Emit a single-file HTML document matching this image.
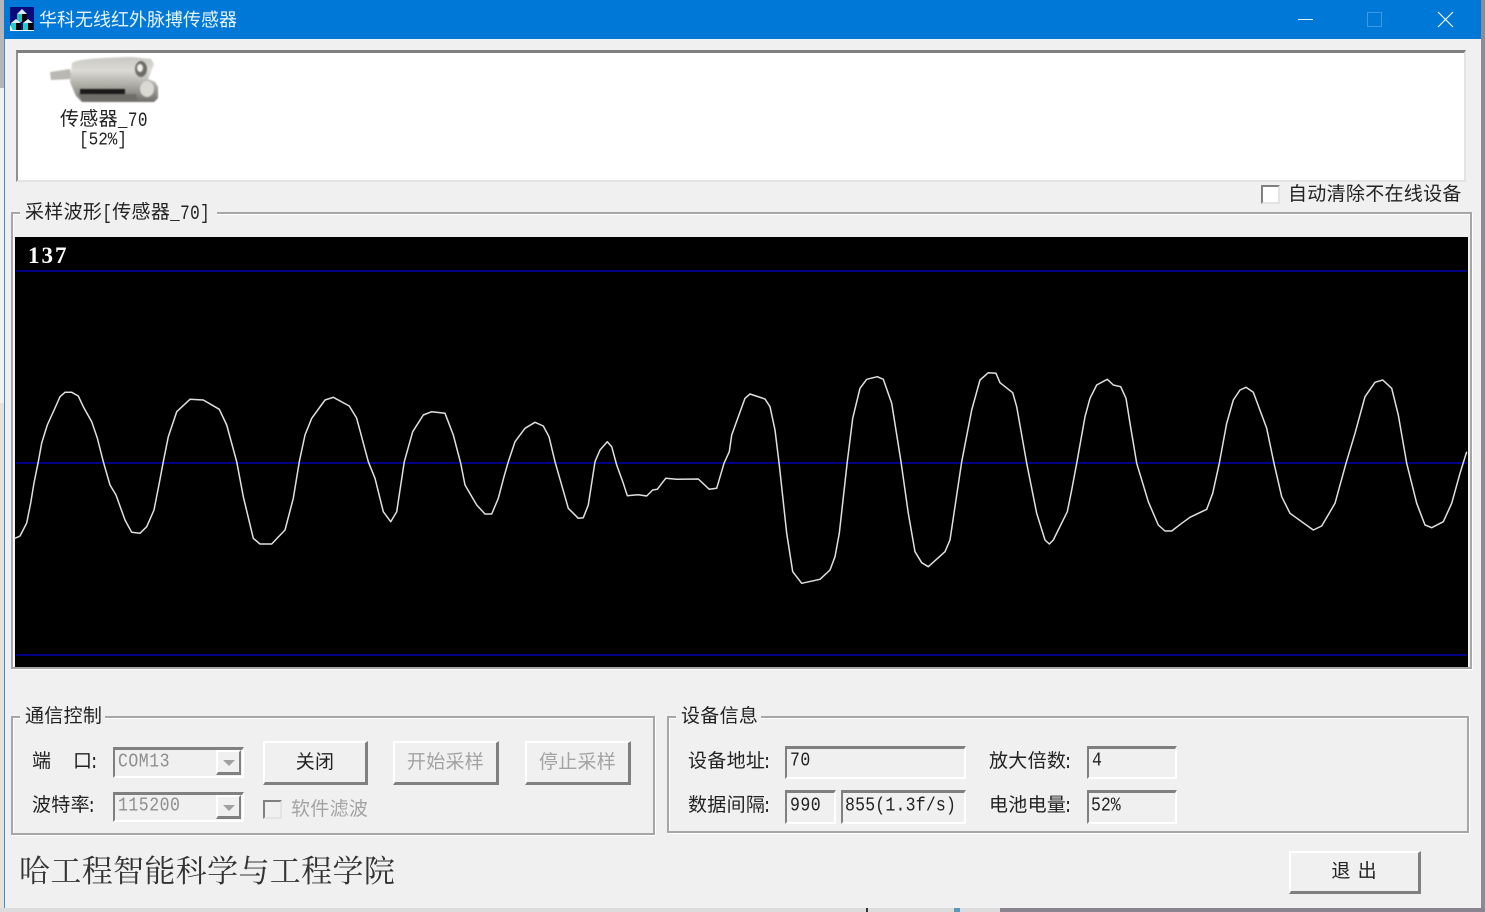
<!DOCTYPE html>
<html lang="zh-CN">
<head>
<meta charset="utf-8">
<title>华科无线红外脉搏传感器</title>
<style>
html,body{margin:0;padding:0;background:#8f8a92;}
body{width:1485px;height:912px;position:relative;overflow:hidden;font-family:"Liberation Mono","Noto Sans CJK SC",monospace;color:#222;}
.a{position:absolute;box-sizing:border-box;white-space:pre;}
.t{position:absolute;white-space:pre;font-size:19px;line-height:24px;color:#222;letter-spacing:.3px;font-family:"Liberation Mono","Noto Sans CJK SC",monospace;}
.t i{font-style:normal;font-size:16px;letter-spacing:.4px;display:inline-block;transform:scaleY(1.25);}
.t i.c{margin-left:-3px;}
.m{position:absolute;white-space:pre;font-size:16.5px;line-height:22px;color:#222;font-family:"Liberation Mono","Noto Serif CJK SC",monospace;letter-spacing:.5px;transform:scaleY(1.15);transform-origin:0 50%;}
.g{position:absolute;box-sizing:border-box;border:2px solid #a6a6a6;box-shadow:inset 1px 1px 0 #fff,1px 1px 0 #fff;}
.lg{position:absolute;background:#f0f0f0;height:24px;}
.in{position:absolute;box-sizing:border-box;border-top:3px solid #808080;border-left:2px solid #808080;border-right:2px solid #fff;border-bottom:2px solid #fff;background:#f0f0f0;}
.b{position:absolute;box-sizing:border-box;background:#f0f0f0;border-top:2px solid #fff;border-left:2px solid #fff;border-right:3px solid #808080;border-bottom:3px solid #808080;text-align:center;font-size:19px;letter-spacing:.3px;font-family:"Liberation Sans","Noto Sans CJK SC",sans-serif;color:#222;}
.cb{position:absolute;box-sizing:border-box;width:19px;height:19px;border-top:2px solid #808080;border-left:2px solid #808080;border-right:2px solid #e3e3e3;border-bottom:2px solid #e3e3e3;background:#fff;}
.ar{position:absolute;box-sizing:border-box;background:#f0f0f0;border-top:2px solid #fff;border-left:2px solid #fff;border-right:2px solid #808080;border-bottom:3px solid #808080;}
.ar:after{content:"";position:absolute;left:5px;top:8px;border-left:6px solid transparent;border-right:6px solid transparent;border-top:6px solid #a0a0a0;}
.d{color:#a3a3a3 !important;}
.m.d{color:#8f8f8f !important;}
</style>
</head>
<body>
<div class="a" style="left:0;top:0;width:4px;height:88px;background:#b5b5bb;"></div>
<div class="a" style="left:0;top:88px;width:4px;height:315px;background:#f1f1f1;"></div>
<div class="a" style="left:0;top:403px;width:4px;height:509px;background:#e6e3df;"></div>
<div class="a" style="left:1481px;top:0;width:4px;height:912px;background:#8f8a92;"></div>
<div class="a" style="left:0;top:908px;width:1000px;height:4px;background:#dcdcdc;"></div>
<div class="a" style="left:866px;top:908px;width:2px;height:4px;background:#333;"></div>
<div class="a" style="left:954px;top:908px;width:6px;height:4px;background:#5b9ab8;"></div>
<div class="a" style="left:1000px;top:908px;width:485px;height:4px;background:#8a8490;"></div>

<!-- window -->
<div class="a" style="left:4px;top:0;width:1477px;height:908px;background:#f0f0f0;border-left:1px solid #3d8fc9;"></div>
<div class="a" style="left:4px;top:0;width:1477px;height:39px;background:#0078d7;"></div>

<!-- app icon -->
<svg class="a" style="left:10px;top:7px" width="24" height="24" viewBox="0 0 24 24">
<rect width="24" height="24" fill="#0a0a7a"/>
<polygon points="7,7 12,2 17,7 12,11" fill="#d8e8f0"/>
<rect x="7" y="7" width="5" height="8" fill="#20c0c0"/><rect x="12" y="7" width="5" height="8" fill="#000"/>
<polygon points="1,16 6,12 11,16 6,19" fill="#e0f0f0"/>
<rect x="1" y="16" width="5" height="7" fill="#20d0d0"/><rect x="6" y="16" width="5" height="7" fill="#000"/>
<polygon points="13,16 18,12 23,16 18,19" fill="#e0f0f0"/>
<rect x="13" y="16" width="5" height="7" fill="#20d0d0"/><rect x="18" y="16" width="5" height="7" fill="#000"/>
<path d="M0 24V17L3 24Z" fill="#fff"/><rect x="0" y="23" width="24" height="1" fill="#fff"/>
</svg>
<div class="a" style="left:39px;top:8px;color:#e8f3fb;font:18px/24px 'Liberation Sans','Noto Sans CJK SC',sans-serif;">华科无线红外脉搏传感器</div>

<!-- window controls -->
<div class="a" style="left:1298px;top:19px;width:15px;height:1px;background:#e6f2fb;"></div>
<div class="a" style="left:1367px;top:12px;width:15px;height:15px;border:1px solid #3f9ae2;"></div>
<svg class="a" style="left:1437px;top:11px" width="17" height="17" viewBox="0 0 17 17"><path d="M1 1L16 16M16 1L1 16" stroke="#f2f8fd" stroke-width="1.2" fill="none"/></svg>

<!-- list box -->
<div class="a" style="left:16px;top:50px;width:1450px;height:132px;background:#fff;border-top:3px solid #808080;border-left:2px solid #909090;border-right:2px solid #e3e3e3;border-bottom:2px solid #e3e3e3;"></div>

<!-- sensor image -->
<svg class="a" style="left:48px;top:54px;filter:blur(.7px)" width="112" height="50" viewBox="0 0 112 50">
<defs>
<linearGradient id="s1" x1="0" y1="0" x2="0" y2="1"><stop offset="0" stop-color="#c9c8c2"/><stop offset=".3" stop-color="#dcdbd5"/><stop offset=".65" stop-color="#a9a8a1"/><stop offset="1" stop-color="#7d7c77"/></linearGradient>
<linearGradient id="s2" x1="0" y1="0" x2="0" y2="1"><stop offset="0" stop-color="#c2c1bb"/><stop offset="1" stop-color="#6f6e69"/></linearGradient>
</defs>
<path d="M2 18L22 15L24 25L3 26Z" fill="#b9b8b2"/>
<path d="M24 9C30 5 50 4 84 3L103 5L106 10L100 25L107 28L110 33L110 44L106 48L34 48L28 42L22 28Z" fill="url(#s1)"/>
<path d="M28 33L40 34L70 30L100 25L107 28L110 33L110 44L106 48L34 48Z" fill="url(#s2)"/>
<rect x="32" y="35" width="45" height="5" fill="#1a1a1a"/>
<path d="M30 40L88 40L90 48L36 48Z" fill="#6f6e68"/>
<ellipse cx="93" cy="15" rx="6" ry="8" fill="#6d6c68"/><ellipse cx="92" cy="14" rx="3" ry="4" fill="#f0efea"/>
<ellipse cx="99" cy="35" rx="7" ry="8" fill="#dad9d3"/>
</svg>
<div class="t" style="left:60px;top:108px;">传感器<i>_70</i></div>
<div class="m" style="left:79px;top:129px;font-size:16px;letter-spacing:0;">[52%]</div>

<!-- auto clear checkbox -->
<div class="cb" style="left:1261px;top:185px;"></div>
<div class="t" style="left:1288px;top:183px;">自动清除不在线设备</div>

<!-- wave group -->
<div class="g" style="left:11px;top:212px;width:1461px;height:457px;"></div>
<div class="lg" style="left:20px;top:200px;width:197px;"></div>
<div class="t" style="left:25px;top:201px;">采样波形<i>[</i>传感器<i>_70]</i></div>
<div class="a" style="left:15px;top:237px;width:1453px;height:430px;background:#000;"></div>
<svg class="a" style="left:0;top:0" width="1485" height="912" viewBox="0 0 1485 912">
<path d="M16 271H1467M16 463H1467M16 655H1467" stroke="#0000b0" stroke-width="1.6" fill="none"/>
<polyline fill="none" stroke="#e0e0e0" stroke-width="1.5" stroke-linejoin="round" points="15,538.3 20,536 26.7,523 30.7,503 34,483 38.3,461.7 41.7,443 47.3,425 55,408 60,396.7 65,392.3 71.7,392.3 78.3,396 83.3,406.7 91.7,421.7 97.3,438 103.3,461.7 110,485 116,495 125,520 131.7,532.3 140,533.3 146.7,526.7 154,510 159.3,483 163.3,461.7 168.3,436.7 176.7,411.7 190,399.3 203.3,400 219.3,409.3 226.7,425 236.7,461.7 243.3,496.7 253.3,538.3 260,544 271.7,544 285,530 293.3,498.3 299.3,461.7 305,435 311.7,418.3 325,400 333.3,397.3 349.3,406 356.7,418.3 368.3,461.7 375,478.3 383.3,511.7 390.7,521.7 396.7,511.7 404.3,461.7 412.7,431.7 423.3,415 431.7,411.7 445,413.3 453.3,435 460.7,463.3 465,485 476.7,505 485,514 491.7,514 498.3,498.3 504,476.7 508.3,461.7 515,441.7 525,428.3 535,422.3 543.3,426 549,436.7 555,461.7 568.3,508.3 578.3,518.3 583.3,517.7 588.3,505 595,461.7 600,450 607.3,441.7 611.7,446.7 616.7,465 623.3,483.3 627.3,495.7 638.3,494.7 646.7,496 652.7,490 657.3,489.3 665.7,478.3 676.7,479.3 698.3,479 709.3,489.3 716.7,488.3 724,463.3 729.3,451.7 731.7,435 745,398.3 750,394 765,399 770,406.7 775,430 779.3,465 786.7,533.3 792.7,571.7 801.7,583.3 820,579.3 830,570 835,556.7 839.3,533.3 847.3,461.7 852.7,418.3 860,388.3 866.7,379.3 877.3,376.7 883.3,379.3 891.7,403.3 901,461.7 908.3,513.3 915,551.7 921.7,562.7 928.3,566.7 945,551.7 950,540 961.7,461.7 971.7,410 980,380 988.3,372.7 996,373.3 1000,382.7 1012.7,392.7 1016.7,406.7 1026.7,463.3 1036.7,513.3 1045,540 1049.3,544 1053.3,540 1067.3,511.7 1071.7,490 1076.7,463.3 1085,416.7 1090,398.3 1096.7,385 1107.3,379.3 1113.3,385 1120.7,386.7 1126,398.3 1130,423.3 1136.7,463.3 1148.3,501.7 1158.3,525 1165,531 1171.7,531 1181.7,523.3 1190,517.3 1206.7,509.3 1212.7,493.3 1219.3,463.3 1226.7,423.3 1233.3,400 1240,390 1246,387.3 1253.3,392.3 1266.7,428.3 1274,463.3 1281.7,496.7 1290,513.3 1313.3,530 1321.7,526 1335,503.3 1346,463.3 1355,433.3 1365,396.7 1375,382.3 1382.7,380 1391.7,388.3 1398.3,415 1406.7,463.3 1416.7,503.3 1425,525 1431.7,527.7 1443.3,521.7 1451.7,503.3 1460,473.3 1466.7,451.7"/>
</svg>
<div class="a" style="left:28px;top:242px;color:#fff;font:bold 23px/28px 'Liberation Serif',serif;letter-spacing:2px;">137</div>

<!-- comm group -->
<div class="g" style="left:11px;top:716px;width:644px;height:119px;"></div>
<div class="lg" style="left:20px;top:704px;width:85px;"></div>
<div class="t" style="left:25px;top:705px;">通信控制</div>
<div class="t" style="left:32px;top:750px;">端</div>
<div class="t" style="left:73px;top:750px;">口<i class="c">:</i></div>
<div class="in" style="left:113px;top:747px;width:131px;height:31px;"></div>
<div class="ar" style="left:216px;top:750px;width:25px;height:25px;"></div>
<div class="m d" style="left:118px;top:751px;">COM13</div>
<div class="t" style="left:32px;top:794px;">波特率<i class="c">:</i></div>
<div class="in" style="left:113px;top:792px;width:131px;height:30px;"></div>
<div class="ar" style="left:216px;top:795px;width:25px;height:24px;"></div>
<div class="m d" style="left:118px;top:795px;">115200</div>
<div class="b" style="left:263px;top:741px;width:105px;height:44px;line-height:40px;">关闭</div>
<div class="b d" style="left:393px;top:741px;width:106px;height:44px;line-height:40px;">开始采样</div>
<div class="b d" style="left:525px;top:741px;width:106px;height:44px;line-height:40px;">停止采样</div>
<div class="cb" style="left:263px;top:800px;background:#f0f0f0;"></div>
<div class="t d" style="left:291px;top:798px;">软件滤波</div>

<!-- info group -->
<div class="g" style="left:667px;top:716px;width:802px;height:117px;"></div>
<div class="lg" style="left:676px;top:704px;width:85px;"></div>
<div class="t" style="left:681px;top:705px;">设备信息</div>
<div class="t" style="left:688px;top:750px;">设备地址<i class="c">:</i></div>
<div class="in" style="left:785px;top:746px;width:181px;height:33px;"></div>
<div class="m" style="left:790px;top:750px;">70</div>
<div class="t" style="left:989px;top:750px;">放大倍数<i class="c">:</i></div>
<div class="in" style="left:1087px;top:746px;width:90px;height:33px;"></div>
<div class="m" style="left:1092px;top:750px;">4</div>
<div class="t" style="left:688px;top:794px;">数据间隔<i class="c">:</i></div>
<div class="in" style="left:785px;top:790px;width:51px;height:34px;"></div>
<div class="m" style="left:790px;top:795px;">990</div>
<div class="in" style="left:841px;top:790px;width:125px;height:34px;"></div>
<div class="m" style="left:845px;top:795px;letter-spacing:.2px;">855(1.3f/s)</div>
<div class="t" style="left:989px;top:794px;">电池电量<i class="c">:</i></div>
<div class="in" style="left:1087px;top:790px;width:90px;height:34px;"></div>
<div class="m" style="left:1091px;top:795px;letter-spacing:0;">52%</div>

<!-- footer -->
<div class="a" style="left:19px;top:850px;font:31px/44px 'Liberation Serif','Noto Serif CJK SC',serif;color:#333;letter-spacing:.35px;">哈工程智能科学与工程学院</div>
<div class="b" style="left:1289px;top:851px;width:132px;height:43px;line-height:38px;letter-spacing:1px;">退 出</div>
</body>
</html>
